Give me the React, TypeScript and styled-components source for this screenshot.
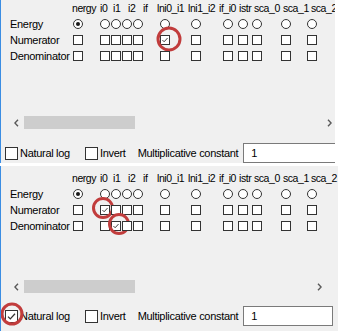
import { Fragment } from "react";
import styled, { createGlobalStyle } from "styled-components";

const GlobalStyle = createGlobalStyle`
  html, body {
    margin: 0;
    padding: 0;
    background: #ffffff;
  }
  body {
    font-family: "Liberation Sans", Arial, sans-serif;
    font-size: 11px;
    color: #000;
  }
`;

const headers = ["nergy", "i0", "i1", "i2", "if", "lni0_i1", "lni1_i2", "if_i0", "istr", "sca_0", "sca_1", "sca_2"];
const headerWidths = [28, 13, 15, 15, 14, 31, 31, 20, 15, 29, 28, 40];
const cellWidths = [27, 11, 11, 11, 27, 31, 32, 15, 14, 29, 26, 11];

type Ring = { row: string; col: number; dx: number; dy: number; size: number };

type PanelData = {
    width: number;
    padTop: number;
    gapAbove: number;
    gapBelow: number;
    scrollWidth: number;
    inputWidth: number;
    checked: Record<string, number[]>;
    rings: Ring[];
    naturalLog: boolean;
    logRing: boolean;
};

const panels: PanelData[] = [
    {
        width: 335,
        padTop: 0,
        gapAbove: 50,
        gapBelow: 12,
        scrollWidth: 329,
        inputWidth: 95,
        checked: { Numerator: [5], Denominator: [] },
        rings: [{ row: "Numerator", col: 5, dx: 3, dy: -1, size: 25 }],
        naturalLog: false,
        logRing: false,
    },
    {
        width: 338,
        padTop: 4,
        gapAbove: 44,
        gapBelow: 11,
        scrollWidth: 319,
        inputWidth: 90,
        checked: { Numerator: [1], Denominator: [2] },
        rings: [
            { row: "Numerator", col: 1, dx: -3, dy: -2, size: 22 },
            { row: "Denominator", col: 2, dx: 2, dy: -2, size: 22 },
        ],
        naturalLog: true,
        logRing: true,
    },
];

const rows = ["Energy", "Numerator", "Denominator"];

const CheckMark = ({ size }: { size: number }) => (
    <svg width={size} height={size} viewBox="0 0 11 11">
        <polyline points="2,5.6 4.3,7.9 9,2.8" fill="none" stroke="#333" strokeWidth="1.3" />
    </svg>
);

const Chevron = ({ dir }: { dir: "left" | "right" }) => (
    <svg width="5" height="8" viewBox="0 0 5 8">
        <polyline
            points={dir === "left" ? "4,0.8 0.9,4 4,7.2" : "1,0.8 4.1,4 1,7.2"}
            fill="none"
            stroke="#5a5a5a"
            strokeWidth="1.4"
        />
    </svg>
);

const App = () => {
    return (
        <Page>
            <GlobalStyle />
            {panels.map((p, pi) => (
                <Panel key={pi} $width={p.width} $padTop={p.padTop}>
                    <HeaderRow>
                        {headers.map((h) => (
                            <HeaderCell key={h}>{h}</HeaderCell>
                        ))}
                    </HeaderRow>

                    <Matrix>
                        {rows.map((r) => (
                            <Fragment key={r}>
                                <RowLabel>{r}</RowLabel>
                                {headers.map((h, ci) => {
                                    const ring = p.rings.find((x) => x.row === r && x.col === ci);
                                    return (
                                        <Cell key={r + h}>
                                            {r === "Energy" ? (
                                                <Radio $selected={ci === 0} />
                                            ) : (
                                                <Box>{p.checked[r].includes(ci) && <CheckMark size={8} />}</Box>
                                            )}
                                            {ring && <RedRing $size={ring.size} $dx={ring.dx} $dy={ring.dy} />}
                                        </Cell>
                                    );
                                })}
                            </Fragment>
                        ))}
                    </Matrix>

                    <Spacer $h={p.gapAbove} />

                    <ScrollBar $width={p.scrollWidth}>
                        <Arrow>
                            <Chevron dir="left" />
                        </Arrow>
                        <Thumb />
                        <Track />
                        <Arrow>
                            <Chevron dir="right" />
                        </Arrow>
                    </ScrollBar>

                    <Spacer $h={p.gapBelow} />

                    <Options>
                        <Option>
                            <OptionBox>
                                {p.naturalLog && <CheckMark size={11} />}
                                {p.logRing && <RedRing $size={23} $dx={0} $dy={-2} />}
                            </OptionBox>
                            Natural log
                        </Option>
                        <Option $gap={15}>
                            <OptionBox />
                            Invert
                        </Option>
                        <ConstLabel>Multiplicative constant</ConstLabel>
                        <ConstInput $width={p.inputWidth} defaultValue="1" />
                    </Options>
                </Panel>
            ))}
        </Page>
    );
};

const Page = styled.div`
    display: flex;
    flex-direction: column;
    gap: 3px;
    width: 338px;
    height: 331px;
    overflow: hidden;
`;

const Panel = styled.section<{ $width: number; $padTop: number }>`
    display: flex;
    flex-direction: column;
    width: ${({ $width }) => $width}px;
    padding-top: ${({ $padTop }) => $padTop}px;
    background: #f0f0f0;
    border-left: 1px solid #3b8de3;
    box-sizing: border-box;
    overflow: hidden;
    flex-shrink: 0;

    &:last-child {
        flex: 1;
    }
`;

const HeaderRow = styled.div`
    display: grid;
    grid-template-columns: ${headerWidths.map((w) => w + "px").join(" ")};
    padding-left: 71px;
    height: 16px;
    align-items: center;
    white-space: nowrap;
`;

const HeaderCell = styled.span`
    font-size: 10.5px;
    line-height: 16px;
    letter-spacing: -0.45px;
`;

const Matrix = styled.div`
    display: grid;
    grid-template-columns: 63px ${cellWidths.map((w) => w + "px").join(" ")};
    grid-auto-rows: 16px;
    align-items: center;
    padding-left: 9px;
`;

const RowLabel = styled.span`
    letter-spacing: -0.3px;
    white-space: nowrap;
`;

const Cell = styled.div`
    position: relative;
    width: 11px;
    height: 11px;
`;

const Box = styled.div`
    width: 10px;
    height: 10px;
    box-sizing: border-box;
    border: 1px solid #333;
    background: #fff;
    display: flex;
    align-items: center;
    justify-content: center;
`;

const Radio = styled.div<{ $selected: boolean }>`
    width: 10px;
    height: 10px;
    box-sizing: border-box;
    border: 1px solid #333;
    border-radius: 50%;
    background: #fff;
    display: flex;
    align-items: center;
    justify-content: center;

    &::after {
        content: "";
        display: ${({ $selected }) => ($selected ? "block" : "none")};
        width: 4px;
        height: 4px;
        border-radius: 50%;
        background: #1a1a1a;
    }
`;

const RedRing = styled.span<{ $size: number; $dx: number; $dy: number }>`
    position: absolute;
    left: 50%;
    top: 50%;
    width: ${({ $size }) => $size}px;
    height: ${({ $size }) => $size}px;
    box-sizing: border-box;
    border: 3px solid #c13c3c;
    border-radius: 50%;
    transform: translate(calc(-50% + ${({ $dx }) => $dx}px), calc(-50% + ${({ $dy }) => $dy}px));
    pointer-events: none;
`;

const Spacer = styled.div<{ $h: number }>`
    height: ${({ $h }) => $h}px;
    flex-shrink: 0;
`;

const ScrollBar = styled.div<{ $width: number }>`
    display: flex;
    align-items: center;
    height: 17px;
    width: ${({ $width }) => $width}px;
    margin-left: 7px;
    flex-shrink: 0;
`;

const Arrow = styled.div`
    width: 16px;
    height: 17px;
    display: flex;
    align-items: center;
    justify-content: center;
`;

const Thumb = styled.div`
    width: 111px;
    height: 13px;
    background: #cdcdcd;
`;

const Track = styled.div`
    flex: 1;
`;

const Options = styled.div`
    display: flex;
    align-items: center;
    height: 20px;
    padding-left: 4px;
    white-space: nowrap;
    letter-spacing: -0.3px;
`;

const Option = styled.label<{ $gap?: number }>`
    display: flex;
    align-items: center;
    gap: 2px;
    margin-left: ${({ $gap }) => $gap ?? 0}px;
`;

const OptionBox = styled.span`
    position: relative;
    width: 13px;
    height: 13px;
    box-sizing: border-box;
    border: 1px solid #333;
    background: #fff;
    display: flex;
    align-items: center;
    justify-content: center;
`;

const ConstLabel = styled.span`
    margin-left: 12px;
`;

const ConstInput = styled.input<{ $width: number }>`
    width: ${({ $width }) => $width}px;
    height: 20px;
    margin-left: 5px;
    box-sizing: border-box;
    border: 1px solid #7a7a7a;
    padding: 0 0 0 7px;
    font: inherit;
    background: #fff;
    flex-shrink: 0;
`;

export default App;
